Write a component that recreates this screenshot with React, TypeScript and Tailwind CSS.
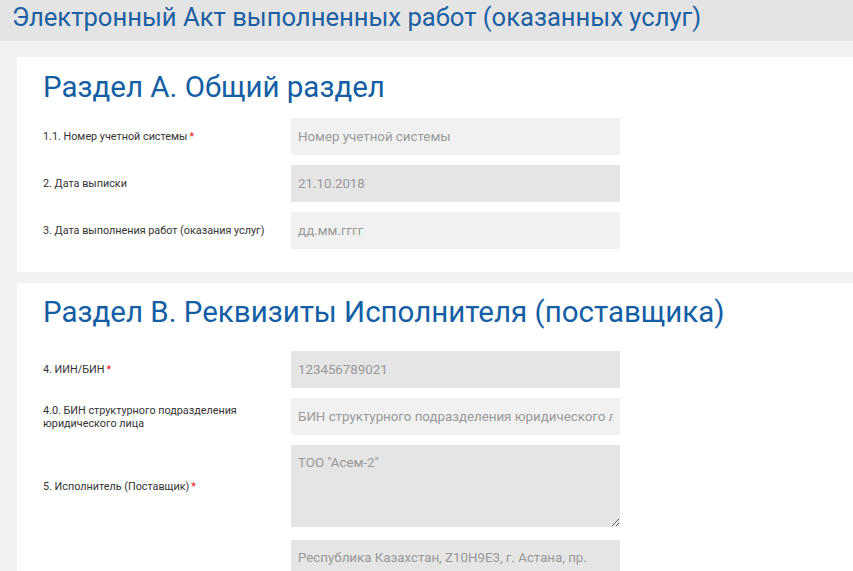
import React from "react";

const Req = () => <span className="text-[#e11] ml-0.5">*</span>;

const Row = ({ label, required, children, className = "" }: any) => (
    <div className={`flex items-center ${className}`}>
        <div className="w-[248px] pr-4 text-[10.8px] leading-[13px] text-[#333]">
            {label}
            {required && <Req />}
        </div>
        {children}
    </div>
);

const Field = ({ value, placeholder, disabled }: any) => (
    <input
        className={`w-[329px] h-[37px] px-[7px] text-[13.3px] text-[#999] placeholder-[#999] outline-none ${
            disabled ? "bg-[#e5e5e5]" : "bg-[#f1f1f1]"
        }`}
        defaultValue={value}
        placeholder={placeholder}
        readOnly={disabled}
    />
);

const App = () => {
    return (
        <div
            className="w-[853px] h-[571px] overflow-hidden bg-[#f2f2f2]"
            style={{ fontFamily: "Roboto, 'Liberation Sans', sans-serif" }}
        >
            <div className="h-[41px] bg-[#e4e4e4] pl-[12px] pt-[2px]">
                <h1 className="text-[25.6px] leading-[30px] text-[#1d5fa3]">
                    Электронный Акт выполненных работ (оказанных услуг)
                </h1>
            </div>

            <div className="ml-[17px] mt-[16px] bg-white h-[215px] pl-[26px]">
                <h2 className="pt-[13px] text-[29.5px] leading-[34px] text-[#135ea4]">
                    Раздел А. Общий раздел
                </h2>
                <div className="mt-[14px] flex flex-col gap-[10px]">
                    <Row label="1.1. Номер учетной системы" required>
                        <Field placeholder="Номер учетной системы" />
                    </Row>
                    <Row label="2. Дата выписки">
                        <Field value="21.10.2018" disabled />
                    </Row>
                    <Row label="3. Дата выполнения работ (оказания услуг)">
                        <Field placeholder="дд.мм.гггг" />
                    </Row>
                </div>
            </div>

            <div className="ml-[17px] mt-[11px] bg-white h-[300px] pl-[26px]">
                <h2 className="pt-[12px] text-[29.5px] leading-[34px] text-[#135ea4]">
                    Раздел В. Реквизиты Исполнителя (поставщика)
                </h2>
                <div className="mt-[22px] flex flex-col gap-[10px]">
                    <Row label="4. ИИН/БИН" required>
                        <Field value="123456789021" disabled />
                    </Row>
                    <Row label={<>4.0. БИН структурного подразделения<br />юридического лица</>}>
                        <Field placeholder="БИН структурного подразделения юридического лица" />
                    </Row>
                    <Row label="5. Исполнитель (Поставщик)" required>
                        <textarea
                            className="w-[329px] h-[82px] px-[7px] py-[8px] text-[13.3px] text-[#999] bg-[#e5e5e5] outline-none resize-y"
                            defaultValue={'ТОО "Асем-2"'}
                            readOnly
                        />
                    </Row>
                    <Row label="" className="mt-[3px]">
                        <textarea
                            className="w-[329px] h-[60px] px-[7px] py-[8px] text-[13.3px] text-[#999] bg-[#e5e5e5] outline-none resize-none"
                            defaultValue="Республика Казахстан, Z10H9E3, г. Астана, пр. Кабанбай батыра, 11"
                            readOnly
                        />
                    </Row>
                </div>
            </div>
        </div>
    );
};

export default App;
